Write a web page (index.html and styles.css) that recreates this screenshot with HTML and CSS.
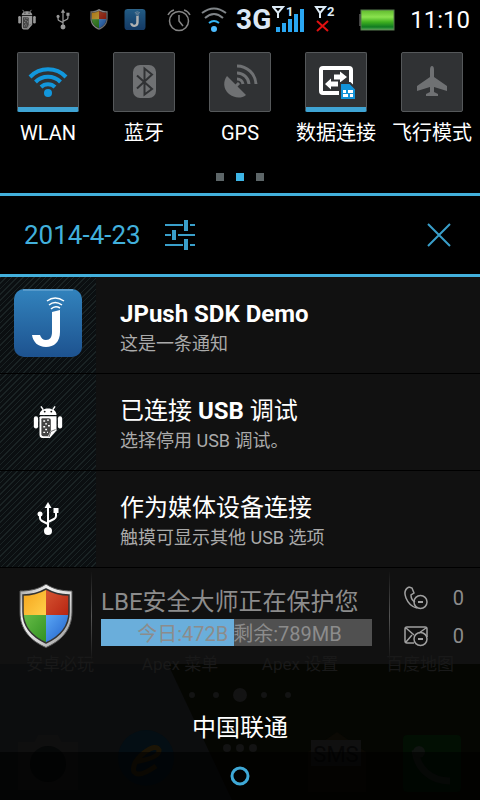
FILE: index.html
```
<!DOCTYPE html>
<html lang="zh-CN">
  <head>
    <meta charset="utf-8">
    <meta name="viewport" content="width=device-width, initial-scale=1">
    <title>通知</title>
    <link rel="stylesheet" href="styles.css">
  </head>
  <body>
    <svg class="defs" aria-hidden="true">
      <defs>
        <linearGradient id="blue" x1="0" y1="0" x2="0" y2="1">
          <stop offset="0" stop-color="#3283bd"/>
          <stop offset="1" stop-color="#1d528f"/>
        </linearGradient>
        <linearGradient id="green" x1="0" y1="0" x2="0" y2="1">
          <stop offset="0" stop-color="#5fba2c"/>
          <stop offset="0.35" stop-color="#8be24f"/>
          <stop offset="0.6" stop-color="#3fb01f"/>
          <stop offset="0.85" stop-color="#0f7a22"/>
          <stop offset="1" stop-color="#5fae5c"/>
        </linearGradient>
        <linearGradient id="silver" x1="0" y1="0" x2="1" y2="1">
          <stop offset="0" stop-color="#9a9a9a"/>
          <stop offset="0.3" stop-color="#f0f0f0"/>
          <stop offset="0.6" stop-color="#d8d8d8"/>
          <stop offset="1" stop-color="#8a8a8a"/>
        </linearGradient>
        <linearGradient id="yellow" x1="0" y1="0" x2="1" y2="1">
          <stop offset="0" stop-color="#f39a12"/>
          <stop offset="1" stop-color="#ffd04a"/>
        </linearGradient>
        <linearGradient id="red" x1="0" y1="0" x2="1" y2="1">
          <stop offset="0" stop-color="#d95a35"/>
          <stop offset="1" stop-color="#b5200f"/>
        </linearGradient>
        <linearGradient id="leaf" x1="0" y1="0" x2="1" y2="1">
          <stop offset="0" stop-color="#6cc04a"/>
          <stop offset="1" stop-color="#2b8d1e"/>
        </linearGradient>
        <linearGradient id="sea" x1="0" y1="0" x2="1" y2="1">
          <stop offset="0" stop-color="#5aa6f5"/>
          <stop offset="1" stop-color="#1552c0"/>
        </linearGradient>
        <clipPath id="inner">
          <path d="M27 5C34 9 42 11 50 11V28C50 43 40 53 27 59C14 53 4 43 4 28V11C12 11 20 9 27 5z"/>
        </clipPath>
      </defs>

      <symbol id="android" viewBox="0 0 32 36">
        <path d="M8.500 1.500L11 5M23.500 1.500L21 5" stroke="currentColor" stroke-width="1.500"/>
        <path d="M7 10.500C7 1.500 25 1.500 25 10.500z" fill="currentColor"/>
        <circle cx="12.500" cy="7" r="1" fill="#111"/><circle cx="19.500" cy="7" r="1" fill="#111"/>
        <rect x="1" y="12" width="4.500" height="13" rx="2.200" fill="currentColor"/>
        <rect x="26.500" y="12" width="4.500" height="13" rx="2.200" fill="currentColor"/>
        <path d="M8 12H25V27L18 35H10Q7 35 7 31V13z" fill="currentColor"/>
        <path d="M10 14H17Q19 14 19 16V27L16 33H11Q9 33 9 31V15Q9 14 10 14z" fill="#444"/>
        <path d="M11 17h2M15 16h2M13 20h2M16 22h2M11 23h2M13 26h2M11 29h2M15 29h1" stroke="currentColor" stroke-width="1.500"/>
        <path d="M17 34L19 28L24 26" stroke="#666" fill="none"/>
      </symbol>

      <symbol id="usb" viewBox="0 0 24 34">
        <path d="M12 4V29M4 13V16Q4 18 6 19L12 22M20 9V14Q20 16 18 17L12 20" fill="none" stroke="currentColor" stroke-width="2"/>
        <path d="M12 0L15.500 6H8.500z" fill="currentColor"/>
        <circle cx="4" cy="12" r="2.500" fill="currentColor"/>
        <rect x="17.500" y="6" width="5" height="5" fill="currentColor"/>
        <circle cx="12" cy="29" r="4" fill="currentColor"/>
      </symbol>

      <symbol id="shield" viewBox="0 0 54 64">
        <path d="M27 0C34 5 43 7 53 7V28C53 46 42 57 27 63.500C12 57 1 46 1 28V7C11 7 20 5 27 0z" fill="url(#silver)" stroke="#555" stroke-width="1"/>
        <g clip-path="url(#inner)">
          <rect width="27" height="31" fill="url(#yellow)"/>
          <rect x="27" width="27" height="31" fill="url(#red)"/>
          <rect y="31" width="27" height="33" fill="url(#leaf)"/>
          <rect x="27" y="31" width="27" height="33" fill="url(#sea)"/>
        </g>
        <path d="M27 5C34 9 42 11 50 11V28C50 43 40 53 27 59C14 53 4 43 4 28V11C12 11 20 9 27 5z" fill="none" stroke="#333" stroke-width="1.500"/>
      </symbol>

      <symbol id="jpush" viewBox="0 0 68 68">
        <rect width="68" height="68" rx="10" fill="url(#blue)"/>
        <path d="M9 1H59" stroke="#7ab0d8" stroke-width="1"/>
        <path d="M38 23L46 21V43C46 53 40 58 32 58C24 58 19 53 18 46H26C27 49 29 51 32 51C36 51 38 48 38 43z" fill="#fff"/>
        <path d="M33 12Q41 6 50 12M35 16Q41 11 48 16M37 20Q41 16 46 19" fill="none" stroke="#fff" stroke-width="1.500"/>
      </symbol>
    </svg>

    <header class="status">
      <div class="status_left">
        <svg class="small"><use href="#android"/></svg>
        <svg class="small"><use href="#usb"/></svg>
        <svg class="small dim"><use href="#shield"/></svg>
        <svg class="small dim"><use href="#jpush"/></svg>
      </div>
      <div class="status_right">
        <svg class="alarm" width="24" height="24" viewBox="0 0 24 24" fill="none" stroke="#858585" stroke-width="1.500">
          <circle cx="12" cy="13" r="9.500"/>
          <path d="M12 7V13L16 18M1 7Q3 3 7 2M23 7Q21 3 17 2"/>
        </svg>
        <svg class="wifi" width="28" height="26" viewBox="0 0 28 26" fill="none" stroke-width="2">
          <path d="M2 6Q14 -3 26 6M5 11Q14 3 23 11" stroke="#7f8488"/>
          <path d="M9 16Q14 12 19 16" stroke="#33b5f5" stroke-width="2"/>
          <circle cx="14" cy="22" r="3" fill="#4dbcff"/>
        </svg>
        <span class="network">3G</span>
        <svg class="signal" width="34" height="28" viewBox="0 0 34 28">
          <path d="M1 3H11L6 9zM6 8V14" fill="none" stroke="#dceaf5" stroke-width="2"/>
          <text x="14" y="12" class="sim">1</text>
          <path d="M4 23h4v5H4zM10 19h4v9h-4zM16 15h4v13h-4zM22 10h4v18h-4zM28 5h4v23h-4z" fill="#2aa7f2"/>
        </svg>
        <svg class="signal second" width="22" height="28" viewBox="0 0 22 28">
          <path d="M2 3H11L6 9zM6 8V14" fill="none" stroke="#dceaf5" stroke-width="2"/>
          <text x="13" y="12" class="sim">2</text>
          <path d="M3 17L14 27M14 17L3 27" stroke="#e01010" stroke-width="2"/>
        </svg>
        <svg class="battery" width="38" height="22" viewBox="0 0 38 22">
          <rect x="1" y="5" width="4" height="12" fill="#444"/>
          <rect x="3" y="1" width="33" height="20" fill="url(#green)" stroke="#587a50"/>
        </svg>
        <time>11:10</time>
      </div>
    </header>

    <section class="toggles">
      <div class="toggle on">
        <button id="wlan" aria-labelledby="wlan_label">
          <svg viewBox="0 0 62 60" fill="none" stroke="#1297dc" stroke-width="4">
            <path d="M13 25A25 25 0 0 1 49 25M18.500 30A17.500 17.500 0 0 1 43.500 30M24 35A10 10 0 0 1 38 35"/>
            <circle cx="31" cy="41" r="4" fill="#1297dc" stroke="none"/>
          </svg>
        </button>
        <label id="wlan_label" for="wlan">WLAN</label>
      </div>
      <div class="toggle">
        <button id="bluetooth" aria-labelledby="bluetooth_label">
          <svg viewBox="0 0 62 60">
            <rect x="20" y="13" width="23" height="33" rx="7" fill="#6f7173"/>
            <path d="M24 23.500L39 37L31.500 42.500V16.500L39 22.500L24 36.500" fill="none" stroke="#303234" stroke-width="2"/>
          </svg>
        </button>
        <label id="bluetooth_label" for="bluetooth">蓝牙</label>
      </div>
      <div class="toggle">
        <button id="gps" aria-labelledby="gps_label">
          <svg viewBox="0 0 62 60" fill="none" stroke="#6f7173" stroke-width="3">
            <path d="M18 24L37 43C32 47 25 46 20 42C14 37 14 29 18 24z" fill="#6f7173" stroke="none"/>
            <path d="M28 14A19 19 0 0 1 47 32M28 21A12 12 0 0 1 40 32M28 27A6 6 0 0 1 34 32"/>
            <path d="M25 36L30 31" stroke-width="3"/>
          </svg>
        </button>
        <label id="gps_label" for="gps">GPS</label>
      </div>
      <div class="toggle on">
        <button id="data" aria-labelledby="data_label">
          <svg viewBox="0 0 62 60">
            <rect x="16" y="16" width="30" height="25" rx="2" fill="none" stroke="#fff" stroke-width="4"/>
            <path d="M29 22.500H35V19.500L42 25L35 30.500V27.500H29zM33 29.500H26V26.500L20 32L26 37.500V34.500H33z" fill="#fff"/>
            <path d="M35 31H45L51 37V48H35z" fill="#1393d8" stroke="#303234" stroke-width="2"/>
            <path d="M38 38h3v3h-3zM43 38h5v3h-5zM38 42h5v3h-5zM45 42h3v3h-3z" fill="#fff"/>
          </svg>
        </button>
        <label id="data_label" for="data">数据连接</label>
      </div>
      <div class="toggle">
        <button id="airplane" aria-labelledby="airplane_label">
          <svg viewBox="0 0 62 60">
            <path d="M31 14Q33 14 33 18V25L46 34V39L33 35V40L37 42V44H25V42L29 40V35L16 39V34L29 25V18Q29 14 31 14z" fill="#6f7173"/>
          </svg>
        </button>
        <label id="airplane_label" for="airplane">飞行模式</label>
      </div>
    </section>
    <div class="dots"><span></span><span class="current"></span><span></span></div>

    <div class="date_row">
      <span class="date">2014-4-23</span>
      <button class="plain" aria-label="设置">
        <svg width="30" height="30" viewBox="0 0 30 30" stroke="#3a9fca" stroke-width="2">
          <path d="M0 5H18M25 5H30M0 15H6M13 15H30M0 25H18M25 25H30"/>
          <path d="M21 0V11M9 10V20M21 19V30" stroke-width="4"/>
        </svg>
      </button>
      <button class="plain close" aria-label="清除">
        <svg width="24" height="24" viewBox="0 0 24 24" stroke="#3a9fca" stroke-width="2">
          <path d="M1 1L23 23M23 1L1 23"/>
        </svg>
      </button>
    </div>

    <main>
      <article class="note">
        <div class="icon"><svg class="app"><use href="#jpush"/></svg></div>
        <div class="text">
          <h2><b>JPush SDK Demo</b></h2>
          <p>这是一条通知</p>
        </div>
      </article>
      <article class="note">
        <div class="icon"><svg class="glyph"><use href="#android"/></svg></div>
        <div class="text">
          <h2>已连接 <b>USB</b> 调试</h2>
          <p>选择停用 USB 调试。</p>
        </div>
      </article>
      <article class="note">
        <div class="icon"><svg class="glyph"><use href="#usb"/></svg></div>
        <div class="text">
          <h2>作为媒体设备连接</h2>
          <p>触摸可显示其他 USB 选项</p>
        </div>
      </article>
      <article class="guard">
        <svg class="guard_icon"><use href="#shield"/></svg>
        <div class="guard_main">
          <h2>LBE安全大师正在保护您</h2>
          <div class="traffic">
            <progress value="49" max="100" aria-labelledby="traffic_text"></progress>
            <span id="traffic_text">今日:472B 剩余:789MB</span>
          </div>
        </div>
        <div class="blocked">
          <svg width="24" height="24" viewBox="0 0 24 24" fill="none" stroke="#a0a0a0" stroke-width="1.500">
            <path d="M5 1L8 2L10 7L7 9C7 12 9 15 11 16M5 1C1 3 0 7 2 12C4 17 8 21 13 22"/>
            <circle cx="16.500" cy="16" r="6.500"/>
            <path d="M14 16h5" stroke-width="2"/>
          </svg>
          <span>0</span>
          <svg width="24" height="24" viewBox="0 0 24 24" fill="none" stroke="#a0a0a0" stroke-width="1.500">
            <path d="M10 19H3Q1 19 1 17V5Q1 3 3 3H21Q23 3 23 5V13M2 4L10 11M22 4L15 9M2 18L8 11"/>
            <circle cx="16.500" cy="15" r="6.500"/>
            <path d="M14 15h5" stroke-width="2"/>
          </svg>
          <span>0</span>
        </div>
      </article>
    </main>

    <footer>
      <!-- home screen showing faintly through the shade -->
      <svg class="wallpaper" viewBox="0 0 480 136" preserveAspectRatio="xMidYMin slice" aria-hidden="true">
        <rect width="480" height="136" fill="#050602"/>
        <path d="M0 0H168L232 136H0z" fill="#0c0d0e"/>
        <g class="ghost_text">
          <text x="60" y="6">安卓必玩</text>
          <text x="180" y="6">Apex 菜单</text>
          <text x="300" y="6">Apex 设置</text>
          <text x="420" y="6">百度地图</text>
        </g>
        <g fill="#131313">
          <circle cx="192" cy="31" r="3"/><circle cx="216" cy="31" r="3"/>
          <circle cx="240" cy="31" r="7"/>
          <circle cx="264" cy="31" r="3"/><circle cx="288" cy="31" r="3"/>
          <circle cx="227" cy="84" r="4"/><circle cx="240" cy="84" r="4"/><circle cx="253" cy="84" r="4"/>
        </g>
        <path d="M18 78H34L38 71H58L62 78H78V126H18z" fill="#0f0f0f"/>
        <circle cx="48" cy="100" r="18" fill="#060808"/>
        <circle cx="146" cy="94" r="28" fill="#040e14"/>
        <path d="M134 98Q160 94 159 86Q156 80 145 88Q131 99 134 108Q139 114 156 102" fill="none" stroke="#1c1506" stroke-width="5"/>
        <path d="M308 88L337 68L366 88V128H308z" fill="#0b0904"/>
        <rect x="311" y="76" width="50" height="26" fill="#101010"/>
        <text x="336" y="98" class="sms">SMS</text>
        <rect x="403" y="71" width="58" height="57" rx="4" fill="#020f03"/>
        <path d="M415 86C417 104 430 117 450 117" fill="none" stroke="#101411" stroke-width="7"/>
        <circle cx="419" cy="88" r="6" fill="#101411"/>
      </svg>
      <div class="carrier">中国联通</div>
      <nav>
        <button class="plain" aria-label="主屏幕">
          <svg width="22" height="22" viewBox="0 0 22 22"><circle cx="11" cy="11" r="8" fill="none" stroke="#3fa9d6" stroke-width="3"/></svg>
        </button>
      </nav>
    </footer>
  </body>
</html>
```
FILE: styles.css
```
* {
    box-sizing: border-box;
}
body {
    margin: 0;
    min-height: 100vh;
    display: flex;
    flex-direction: column;
    background: #000;
    color: #fff;
    font-family: Roboto, "Noto Sans CJK SC", sans-serif;
}
svg {
    display: block;
}
h2, p {
    margin: 0;
    font-weight: normal;
}
button {
    padding: 0;
    cursor: pointer;
}
.defs {
    position: absolute;
    width: 0;
    height: 0;
}
.status {
    display: flex;
    justify-content: space-between;
    align-items: center;
    height: 40px;
    padding: 0 10px 0 15px;
}
.status_left {
    display: flex;
    gap: 12px;
    color: #999;
    padding-bottom: 2px;
}
.status_right {
    display: flex;
    align-items: center;
}
.small {
    width: 24px;
    height: 21px;
}
.dim {
    opacity: 0.7;
}
.wifi {
    margin: 0 8px 0 9px;
}
.network {
    font-size: 28px;
    font-weight: bold;
    line-height: 40px;
    color: #dce8f5;
}
.signal {
    margin: 0 0 4px 1px;
}
.second {
    margin-left: 8px;
}
.sim {
    font-size: 13px;
    font-weight: bold;
    fill: #dceaf5;
}
.battery {
    margin: 0 14px 0 22px;
}
time {
    font-size: 24px;
    line-height: 40px;
}
.toggles {
    display: grid;
    grid-template-columns: repeat(5, 1fr);
    padding-top: 12px;
}
.toggle {
    display: flex;
    flex-direction: column;
    align-items: center;
    gap: 4px;
}
.toggle button {
    width: 62px;
    height: 60px;
    border: 1px solid #55585a;
    border-radius: 2px;
    background: #303234;
}
.toggle.on button {
    border-bottom: 5px solid #3fa4d4;
}
.toggle svg {
    width: 62px;
    height: 60px;
    margin: -1px;
}
.toggle.on svg {
    margin-bottom: -5px;
}
.toggle label {
    font-size: 20px;
    line-height: 34px;
    white-space: nowrap;
}
.dots {
    display: flex;
    justify-content: center;
    gap: 12px;
    padding: 23px 0 12px;
}
.dots span {
    width: 8px;
    height: 8px;
    background: #5d6668;
}
.dots .current {
    background: #3db5e6;
}
.date_row {
    display: flex;
    align-items: center;
    gap: 24px;
    height: 84px;
    padding: 0 29px 0 24px;
    border-top: 3px solid #42b0dc;
    border-bottom: 3px solid #42b0dc;
}
.date {
    font-size: 26px;
    color: #42b0dc;
}
.plain {
    border: 0;
    background: none;
}
.close {
    margin-left: auto;
}
.note {
    display: flex;
    height: 97px;
    background: #111;
    border-bottom: 1px solid #000;
}
.icon {
    display: flex;
    align-items: center;
    justify-content: center;
    width: 96px;
    background: #0b0f11 repeating-linear-gradient(135deg, #1a2324 0, #1a2324 1px, transparent 1px, transparent 4px);
}
.app {
    width: 68px;
    height: 68px;
    margin-bottom: 4px;
}
.glyph {
    width: 32px;
    height: 34px;
}
.text {
    flex: 1;
    display: flex;
    flex-direction: column;
    justify-content: center;
    padding: 2px 0 0 24px;
}
.text h2 {
    font-size: 24px;
    line-height: 36px;
}
.text p {
    font-size: 18px;
    line-height: 24px;
    color: #aaa;
}
.guard {
    display: flex;
    align-items: center;
    height: 96px;
    background: #111;
    color: #8c8c8c;
}
.guard_icon {
    width: 54px;
    height: 64px;
    margin: 0 18px 0 19px;
}
.guard_main, .blocked {
    height: 88px;
    border-left: 1px solid;
    border-image: linear-gradient(#111, #555, #111) 1;
}
.guard_main {
    flex: 1;
    padding: 13px 17px 0 9px;
}
.guard h2 {
    font-size: 24px;
    line-height: 34px;
    white-space: nowrap;
}
.traffic {
    display: grid;
}
.traffic > * {
    grid-area: 1 / 1;
}
progress {
    appearance: none;
    width: 100%;
    height: 27px;
    border: 0;
    background: #505050;
}
progress::-webkit-progress-bar {
    background: #505050;
}
progress::-webkit-progress-value {
    background: #6aaedb;
}
.traffic span {
    z-index: 1;
    padding-left: 6px;
    font-size: 20px;
    line-height: 30px;
    text-align: center;
}
.blocked {
    width: 91px;
    display: grid;
    grid-template-columns: 24px auto;
    justify-content: space-between;
    align-content: center;
    align-items: center;
    row-gap: 8px;
    padding: 2px 16px 0 14px;
}
.blocked span {
    font-size: 20px;
    line-height: 30px;
}
footer {
    flex: 1;
    display: flex;
    flex-direction: column;
    position: relative;
}
.wallpaper {
    position: absolute;
    width: 100%;
    height: 100%;
    overflow: visible;
}
.ghost_text, .sms {
    font-size: 17px;
    fill: #191919;
    text-anchor: middle;
}
.sms {
    font-size: 22px;
    fill: #060606;
}
.carrier {
    flex: 1;
    padding-top: 46px;
    font-size: 24px;
    line-height: 36px;
    text-align: center;
    z-index: 1;
}
nav {
    display: flex;
    align-items: center;
    justify-content: center;
    height: 48px;
    background: rgba(0, 0, 0, 0.6);
    z-index: 1;
}
```
